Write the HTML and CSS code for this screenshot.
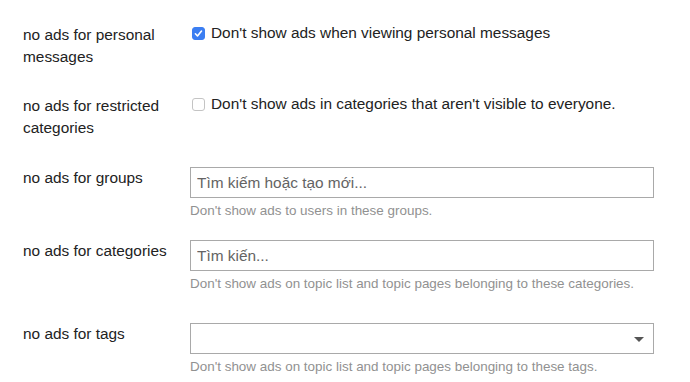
FILE: index.html
```html
<!DOCTYPE html>
<html lang="en">
<head>
  <meta charset="UTF-8" />
  <title>Ad settings</title>
  <link rel="stylesheet" href="styles.css">
</head>
<body>
  <div class="settings">
    <div class="row row-pm">
      <div class="label">no ads for personal messages</div>
      <label class="check">
        <input type="checkbox" checked>
        <span>Don't show ads when viewing personal messages</span>
      </label>
    </div>

    <div class="row row-restricted">
      <div class="label">no ads for restricted categories</div>
      <label class="check">
        <input type="checkbox">
        <span>Don't show ads in categories that aren't visible to everyone.</span>
      </label>
    </div>

    <div class="row row-groups">
      <div class="label">no ads for groups</div>
      <div class="control">
        <input class="field" type="text" placeholder="Tìm kiếm hoặc tạo mới...">
        <div class="help">Don't show ads to users in these groups.</div>
      </div>
    </div>

    <div class="row row-categories">
      <div class="label">no ads for categories</div>
      <div class="control">
        <input class="field" type="text" placeholder="Tìm kiến...">
        <div class="help">Don't show ads on topic list and topic pages belonging to these categories.</div>
      </div>
    </div>

    <div class="row row-tags">
      <div class="label">no ads for tags</div>
      <div class="control">
        <div class="field select"><span class="caret"></span></div>
        <div class="help">Don't show ads on topic list and topic pages belonging to these tags.</div>
      </div>
    </div>
  </div>
</body>
</html>
```

FILE: styles.css
```css
body {
  margin: 0;
  font-family: 'Liberation Sans', Arial, sans-serif;
  color: #222;
  background: #fff;
}
.settings {
  padding: 24px 0 0 23px;
}
.row {
  display: grid;
  grid-template-columns: 167px 464px;
  align-items: start;
}
.label {
  font-size: 15.4px;
  line-height: 22px;
  padding-right: 10px;
}
.row-pm { margin-bottom: 27px; }
.row-restricted { margin-bottom: 28px; }
.row-groups { margin-bottom: 20px; }
.row-categories { margin-bottom: 30px; }

/* Checkbox rows */
.check {
  display: flex;
  align-items: center;
  gap: 6px;
  font-size: 15.4px;
  line-height: 18px;
  padding-left: 2px;
}
.check input {
  appearance: none;
  width: 13px;
  height: 13px;
  margin: 0;
  border: 1px solid #c4c4c4;
  border-radius: 3px;
  background: #fff;
  flex-shrink: 0;
}
.check input:checked {
  border-color: #3b7ef2;
  background: #3b7ef2 url("data:image/svg+xml,%3Csvg xmlns='http://www.w3.org/2000/svg' viewBox='0 0 13 13'%3E%3Cpath d='M3.4 6.8l2.1 2.2 4-5' fill='none' stroke='%23fff' stroke-width='1.6' stroke-linecap='round' stroke-linejoin='round'/%3E%3C/svg%3E") center / 13px 13px no-repeat;
}

/* Inputs */
.field {
  box-sizing: border-box;
  display: block;
  width: 464px;
  height: 31px;
  margin: 0;
  padding: 0 6px;
  border: 1px solid #a9a9a9;
  border-radius: 0;
  font-family: inherit;
  font-size: 15.4px;
  color: #222;
  background: #fff;
  outline: none;
}
.field::placeholder {
  color: #646464;
}
.select {
  position: relative;
}
.caret {
  position: absolute;
  right: 9px;
  top: 13px;
  width: 0;
  height: 0;
  border-left: 5px solid transparent;
  border-right: 5px solid transparent;
  border-top: 5px solid #555;
}
.help {
  font-size: 13.45px;
  line-height: 18px;
  color: #919191;
  margin-top: 4px;
}
```
